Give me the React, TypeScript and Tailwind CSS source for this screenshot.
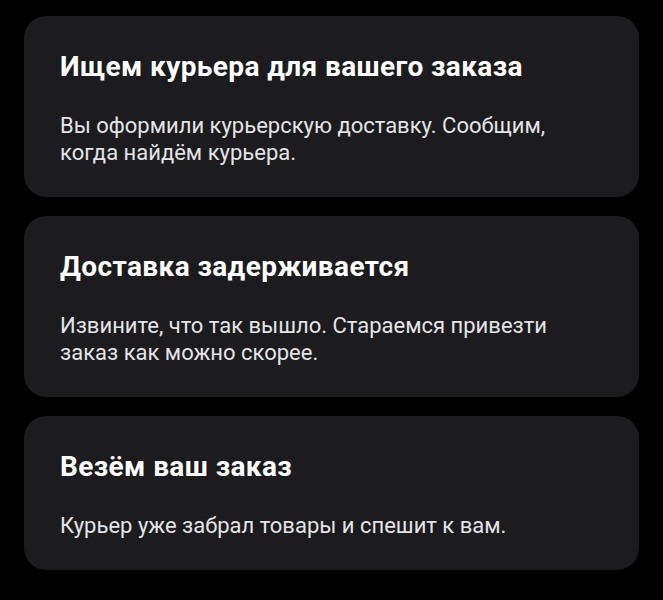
import React from 'react';

const items = [
  {
    title: 'Ищем курьера для вашего заказа',
    text: 'Вы оформили курьерскую доставку. Сообщим, когда найдём курьера.',
  },
  {
    title: 'Доставка задерживается',
    text: 'Извините, что так вышло. Стараемся привезти заказ как можно скорее.',
  },
  {
    title: 'Везём ваш заказ',
    text: 'Курьер уже забрал товары и спешит к вам.',
  },
];

const StatusCard = ({ title, text }: { title: string; text: string }) => (
  <div className="rounded-[22px] bg-[#1c1c1f] pl-9 pr-20 pt-[35px] pb-[31px]">
    <h2 className="text-[28px] leading-[32px] font-bold tracking-[0.4px] text-white">{title}</h2>
    <p className="mt-[29px] text-[22px] leading-[27px] text-[#e4e4e6]">{text}</p>
  </div>
);

export default function App() {
  return (
    <div
      className="min-h-[600px] bg-black px-6 pt-4 pb-8 flex flex-col gap-[19px]"
      style={{ fontFamily: 'Roboto, "Noto Sans", sans-serif' }}
    >
      {items.map((item) => (
        <StatusCard key={item.title} title={item.title} text={item.text} />
      ))}
    </div>
  );
}
